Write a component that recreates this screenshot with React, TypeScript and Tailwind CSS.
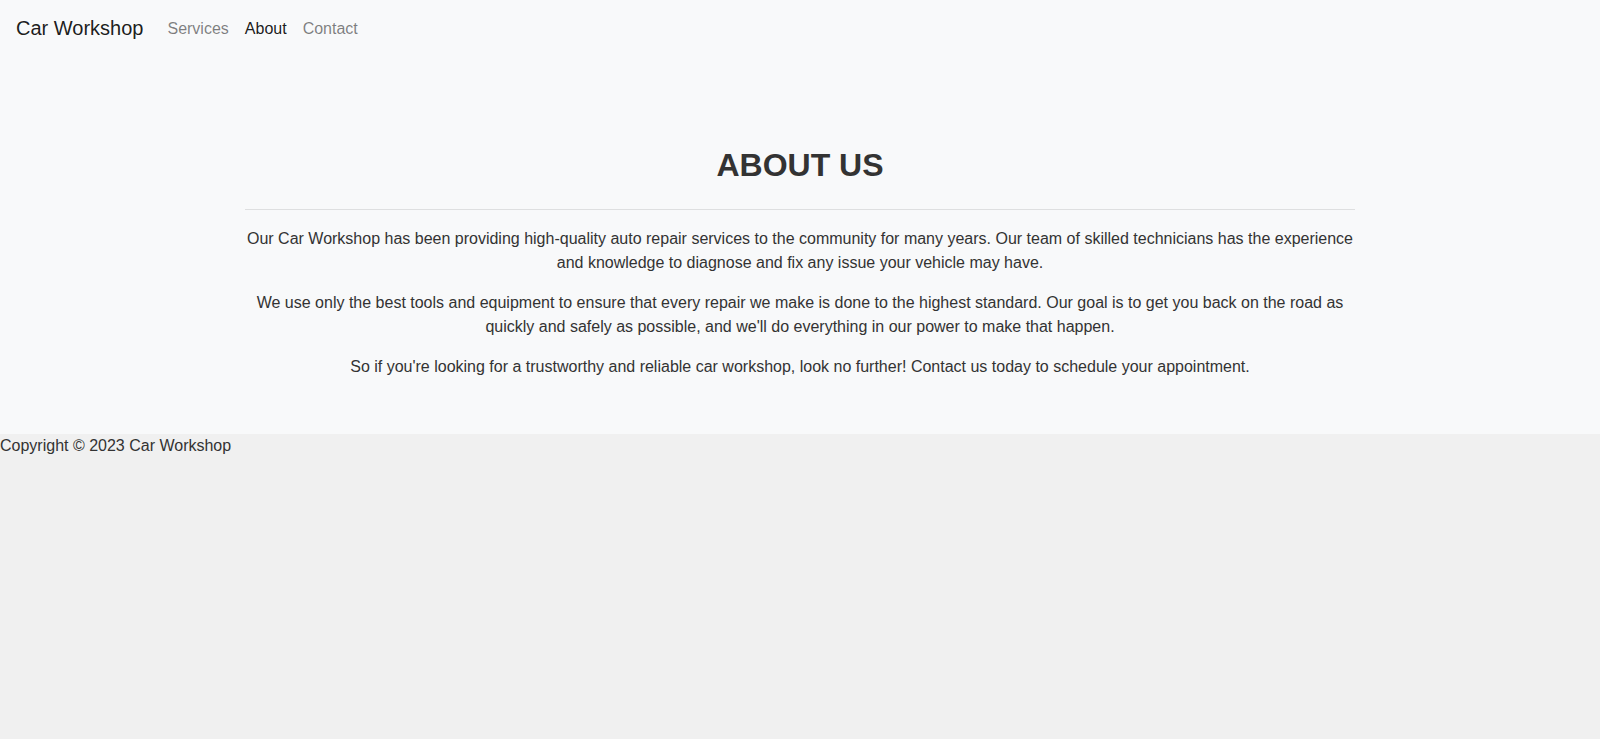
const links = [
  { label: "Services", active: false },
  { label: "About", active: true },
  { label: "Contact", active: false },
];

const paragraphs = [
  "Our Car Workshop has been providing high-quality auto repair services to the community for many years. Our team of skilled technicians has the experience and knowledge to diagnose and fix any issue your vehicle may have.",
  "We use only the best tools and equipment to ensure that every repair we make is done to the highest standard. Our goal is to get you back on the road as quickly and safely as possible, and we'll do everything in our power to make that happen.",
  "So if you're looking for a trustworthy and reliable car workshop, look no further! Contact us today to schedule your appointment.",
];

export default function App() {
  return (
    <div className="min-h-screen bg-[#f0f0f0] text-[#333] text-base leading-6" style={{ fontFamily: '"Liberation Sans", Arial, sans-serif' }}>
      <nav className="flex items-center bg-[#f8f9fa] px-4 py-2">
        <a href="#" className="mr-4 py-[5px] text-xl leading-[30px] text-black/90">Car Workshop</a>
        <ul className="flex">
          {links.map(l => (
            <li key={l.label}>
              <a href="#" className={`block px-2 pt-[9px] pb-[7px] ${l.active ? "text-black/90" : "text-black/50"}`}>{l.label}</a>
            </li>
          ))}
        </ul>
      </nav>

      <section className="bg-[#f8f9fa] pt-[90px] pb-[39px]">
        <div className="mx-auto w-[1110px] text-center">
          <h2 className="mb-[25px] text-[32px] font-bold leading-[38.4px] text-[#333]">ABOUT US</h2>
          <hr className="mt-4 mb-[17px] border-t border-black/10" />
          {paragraphs.map(p => (
            <p key={p} className="mb-4">{p}</p>
          ))}
        </div>
      </section>

      <footer>
        <p>Copyright © 2023 Car Workshop</p>
      </footer>
    </div>
  );
}
